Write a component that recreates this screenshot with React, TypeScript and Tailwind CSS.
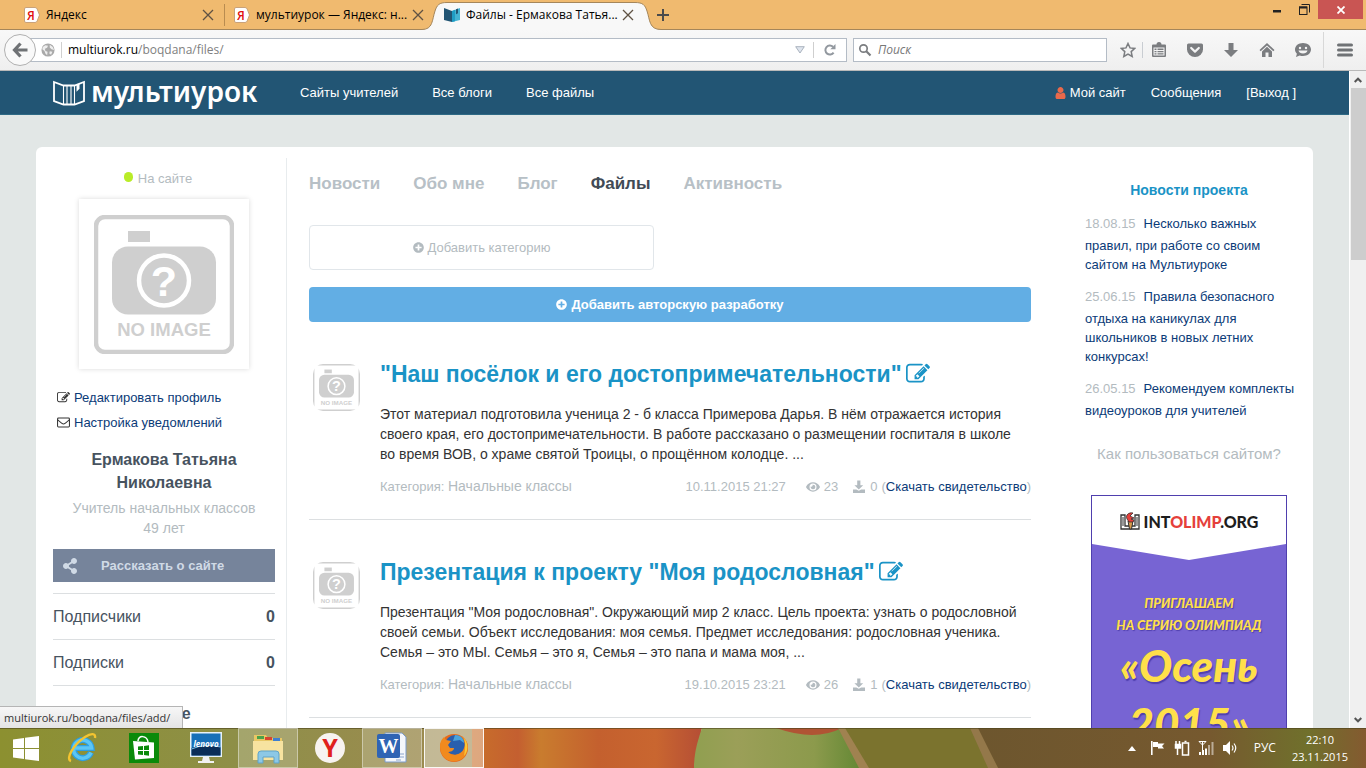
import type { ReactNode } from "react";
import { FaEye, FaPlusCircle, FaShareAlt } from "react-icons/fa";

const news = [
  { date: "18.08.15", text: "Несколько важных правил, при работе со своим сайтом на Мультиуроке" },
  { date: "25.06.15", text: "Правила безопасного отдыха на каникулах для школьников в новых летних конкурсах!" },
  { date: "26.05.15", text: "Рекомендуем комплекты видеоуроков для учителей" },
];

const articles = [
  {
    title: '"Наш посёлок и его достопримечательности"',
    text: "Этот материал подготовила ученица 2 - б класса Примерова Дарья. В нём отражается история своего края, его достопримечательности. В работе рассказано о размещении госпиталя в школе во время ВОВ, о храме святой Троицы, о прощённом колодце. ...",
    date: "10.11.2015 21:27",
    views: 23,
    downloads: 0,
  },
  {
    title: 'Презентация к проекту "Моя родословная"',
    text: 'Презентация "Моя родословная". Окружающий мир 2 класс. Цель проекта: узнать о родословной своей семьи. Объект исследования: моя семья. Предмет исследования: родословная ученика. Семья – это МЫ. Семья – это я, Семья – это папа и мама моя, ...',
    date: "19.10.2015 23:21",
    views: 26,
    downloads: 1,
  },
];

const sections = [
  { label: "Новости" },
  { label: "Обо мне" },
  { label: "Блог" },
  { label: "Файлы", active: true },
  { label: "Активность" },
];

function EditIcon({ className }: { className: string }) {
  return (
    <svg viewBox="0 0 1792 1792" fill="currentColor" className={className} aria-hidden="true">
      <path d="M888 1184l116-116-152-152-116 116v56h96v96h56zm440-720q-16-16-33 1l-350 350q-17 17-1 33t33-1l350-350q17-17 1-33zm80 594v190q0 119-84.5 203.5t-203.5 84.5h-832q-119 0-203.5-84.5t-84.5-203.5v-832q0-119 84.5-203.5t203.5-84.5h832q63 0 117 25 15 7 18 23 3 17-9 29l-49 49q-14 14-32 8-23-6-45-6h-832q-66 0-113 47t-47 113v832q0 66 47 113t113 47h832q66 0 113-47t47-113v-126q0-13 9-22l64-64q15-15 35-7t20 29zm-96-738l288 288-672 672h-288v-288zm444 132l-92 92-288-288 92-92q28-28 68-28t68 28l152 152q28 28 28 68t-28 68z" />
    </svg>
  );
}

function UserIcon({ className }: { className: string }) {
  return (
    <svg viewBox="256 128 1280 1536" fill="currentColor" className={className} aria-hidden="true">
      <path d="M1536 1399q0 109-62.5 187t-150.5 78h-854q-88 0-150.5-78t-62.5-187q0-85 8.5-160.5t31.5-152 58.5-131 94-89 134.5-34.5q131 128 313 128t313-128q76 0 134.5 34.5t94 89 58.5 131 31.5 152 8.5 160.5zm-256-887q0 159-112.5 271.5t-271.5 112.5-271.5-112.5-112.5-271.5 112.5-271.5 271.5-112.5 271.5 112.5 112.5 271.5z" />
    </svg>
  );
}

function MailIcon({ className }: { className: string }) {
  return (
    <svg viewBox="0 0 14 14" fill="none" stroke="currentColor" className={className} aria-hidden="true">
      <rect x="0.6" y="2.1" width="12.8" height="9.8" rx="1" strokeWidth="1.1" />
      <path d="M0.8 4.2 Q5.6 8.6 7 8.6 T13.2 4.2" strokeWidth="1.1" />
    </svg>
  );
}

function SaveIcon({ className }: { className: string }) {
  return (
    <svg viewBox="0 0 14 14" fill="currentColor" className={className} aria-hidden="true">
      <path d="M5.2 0.5h3.2v4.7h2.8L6.8 9.4 2.4 5.2h2.8z" />
      <path d="M1 9.4h3.4l2.4 1.4 2.4-1.4H13V13H1z" />
    </svg>
  );
}

function NoImage({ className }: { className: string }) {
  return (
    <svg viewBox="0 0 140 139" className={className} role="img" aria-label="NO IMAGE" fontFamily="Liberation Sans, sans-serif" fontWeight="700">
      <rect x="2" y="2" width="136" height="135" rx="9" fill="#fff" stroke="#cfcfcf" strokeWidth="4.5" />
      <rect x="34" y="16" width="22" height="11" fill="#cfcfcf" />
      <rect x="18" y="31.5" width="104" height="68" rx="16" fill="#cfcfcf" />
      <circle cx="70" cy="65.5" r="25" fill="none" stroke="#fff" strokeWidth="4.5" />
      <text x="70" y="81" textAnchor="middle" fontSize="43" fill="#fff">
        ?
      </text>
      <text x="70" y="121" textAnchor="middle" fontSize="18.5" fill="#cfcfcf">
        NO IMAGE
      </text>
    </svg>
  );
}

function YandexFavicon() {
  return (
    <svg viewBox="0 0 16 16" className="h-4 w-4">
      <path d="M2 0.5h9q1.5 0 2.2 1.5L15.5 8l-2.3 6q-.7 1.5-2.2 1.5H2Q.5 15.5.5 14V2Q.5.5 2 .5z" fill="#fff" stroke="#c9a27a" />
      <text x="7" y="12.5" textAnchor="middle" fontSize="12" fontWeight="600" fill="#e01010">
        Я
      </text>
    </svg>
  );
}

function CloseIcon() {
  return (
    <svg viewBox="0 0 12 12" className="h-3 w-3" stroke="#5f5243" strokeWidth="1.3">
      <path d="M1 1l10 10M11 1L1 11" />
    </svg>
  );
}

function BrowserTab({ icon, title, active }: { icon: ReactNode; title: string; active?: boolean }) {
  return (
    <div className={`relative flex h-[30px] w-[210px] items-center gap-1.5 px-2.5 ${active ? "z-10" : ""}`}>
      {active && (
        <svg viewBox="0 0 240 30" className="absolute top-0 -left-3 h-[30px] w-[240px]">
          <path
            d="M0 29.5C11 29.5 10 20 13 11C15 5 17 2.5 25 2.5H213C221 2.5 223 5 225 11C228 20 227 29.5 239 29.5V30H0Z"
            fill="#f8f8f8"
          />
          <path
            d="M0 29.5C11 29.5 10 20 13 11C15 5 17 2.5 25 2.5H213C221 2.5 223 5 225 11C228 20 227 29.5 239 29.5"
            fill="none"
            stroke="#a5865a"
          />
        </svg>
      )}
      <span className="relative shrink-0">{icon}</span>
      <span className="relative min-w-0 flex-1 whitespace-nowrap">{title}</span>
      <button className="relative" aria-label="Закрыть вкладку">
        <CloseIcon />
      </button>
    </div>
  );
}

function TabBar() {
  return (
    <div className="flex h-[30px] shrink-0 items-center border-b border-[#a5865a] bg-[#f0ba6f] pl-3.5 text-xs text-black">
      <BrowserTab icon={<YandexFavicon />} title="Яндекс" />
      <span className="-mr-px h-[22px] w-px bg-[#b98c50]" />
      <BrowserTab icon={<YandexFavicon />} title="мультиурок — Яндекс: н..." />
      <BrowserTab
        active
        title="Файлы - Ермакова Татья..."
        icon={
          <svg viewBox="0 0 16 16" className="h-4 w-4">
            <path d="M0 1l8 3v11l-8-2z" fill="#225574" />
            <path d="M16 1L8 4v11l8-2z" fill="#45b3d3" />
            <path d="M8 4l3-1.2v11.5L8 15z" fill="#1f9cc4" />
            <path d="M12 2.3v5l2-1V1.6z" fill="#225574" />
          </svg>
        }
      />
      <button className="ml-3" aria-label="Новая вкладка">
        <svg viewBox="0 0 14 14" className="h-3.5 w-3.5" stroke="#4b4b4b" strokeWidth="2">
          <path d="M7 1v12M1 7h12" />
        </svg>
      </button>
      <div className="ml-auto flex items-start self-start pr-[3px]">
        <button className="flex h-5 w-[26px] items-center justify-center" aria-label="Свернуть">
          <svg viewBox="0 0 8 8" className="h-2 w-2">
            <path d="M0 4h8v2.5H0z" fill="#222" />
          </svg>
        </button>
        <button className="flex h-[19px] w-[28px] items-center justify-center" aria-label="Развернуть">
          <svg viewBox="0 0 11 11" className="h-[11px] w-[11px]" fill="none" stroke="#222">
            <path d="M2.5 0.5h8v8" />
            <rect x="0.5" y="3" width="7.5" height="7.5" />
            <path d="M0 3.5h8" strokeWidth="2" />
          </svg>
        </button>
        <button className="flex h-[19px] w-[45px] items-center justify-center bg-[#c95553]" aria-label="Закрыть">
          <svg viewBox="0 0 8 8" className="h-2 w-2" stroke="#fff" strokeWidth="1.8">
            <path d="M0.5 0.5l7 7M7.5 0.5l-7 7" />
          </svg>
        </button>
      </div>
    </div>
  );
}

function ToolButton({ label, children }: { label: string; children: ReactNode }) {
  return (
    <button className="flex h-6 w-9 items-center justify-center" aria-label={label}>
      <svg viewBox="0 0 16 16" className="h-4 w-4" fill="#7b7d80">
        {children}
      </svg>
    </button>
  );
}

function Toolbar() {
  return (
    <div className="flex h-[41px] shrink-0 items-center border-b border-[#b9b9b9] bg-linear-to-b from-[#f8f8f8] to-[#efefef] pl-1 text-xs">
      <button className="relative z-10 flex h-8 w-8 items-center justify-center rounded-full border border-[#b0b0b0] bg-[#f9f9f9]" aria-label="Назад">
        <svg viewBox="0 0 16 16" className="h-4 w-4" fill="none" stroke="#6f7275" strokeWidth="3.2">
          <path d="M8.5 1.5L2.5 8l6 6.5M3 8h12.5" />
        </svg>
      </button>
      <div className="-ml-2 flex h-6 flex-1 items-center border border-[#b4bcc6] bg-white pl-3">
        <svg viewBox="0 0 16 16" className="h-3.5 w-3.5">
          <circle cx="8" cy="8" r="7.5" fill="#a9a9a9" />
          <path d="M2 4.5l3-2 3 .5-1 2.5-2.5 1L5 9l2.5 1-.5 4-2-2-1-3-2.5-2zM10 2l3.5 2.5L15 8l-3-1-2-2zM10 9.5l3 .5-1.5 3.5-2-1.5z" fill="#eee" />
        </svg>
        <span className="mx-1.5 h-4 w-px bg-[#d0d0d0]" />
        <a href="#" className="flex-1 text-[#808080]">
          <span className="text-black">multiurok.ru</span>/boqdana/files/
        </a>
        <svg viewBox="0 0 10 8" className="mr-2 h-2 w-2.5" fill="#dfe5ee" stroke="#a9b2bd">
          <path d="M0.7 0.7h8.6L5 7z" />
        </svg>
        <button className="flex h-4 w-[33px] items-center justify-center border-l border-[#cfcfcf]" aria-label="Обновить">
          <svg viewBox="0 0 12 12" className="h-3 w-3">
            <path d="M9.6 8.6A4.5 4.5 0 1 1 9 2.8" fill="none" stroke="#92989f" strokeWidth="2" />
            <path d="M11.5 0v5.2H6.3z" fill="#92989f" />
          </svg>
        </button>
      </div>
      <label className="ml-1.5 flex h-6 w-[254px] items-center gap-1 border border-[#b4bcc6] bg-white pl-1">
        <svg viewBox="0 0 14 14" className="h-3.5 w-3.5" fill="none" stroke="#7b7d80" strokeWidth="1.7">
          <circle cx="5.5" cy="5.5" r="3.7" />
          <path d="M8.3 8.3l4.2 4.2" strokeWidth="2.2" />
        </svg>
        <input placeholder="Поиск" aria-label="Поиск" className="ml-0.5 w-40 outline-none placeholder:text-[#777] placeholder:italic" />
      </label>
      <button className="ml-1.5 flex h-4 w-[30px] items-center justify-center border-r border-[#c9cdd2]" aria-label="Добавить в закладки">
        <svg viewBox="0 0 16 16" className="h-4 w-4" fill="none" stroke="#7b7d80" strokeWidth="1.5">
          <path d="M8 1.5l2 4.4 4.8.5-3.6 3.2 1 4.9L8 12l-4.2 2.5 1-4.9L1.2 6.4 6 5.9z" />
        </svg>
      </button>
      <div className="-ml-0.5 flex items-center">
        <ToolButton label="Закладки">
          <path d="M2 2.5h3.5a2.5 2.5 0 0 1 5 0H14a1 1 0 0 1 1 1v10.5a1 1 0 0 1-1 1H2a1 1 0 0 1-1-1V3.5a1 1 0 0 1 1-1zM2.5 5.5v8h11v-8zM3.5 6.5h2V8h-2zM6.5 6.5h6V8h-6zM3.5 9h2v1.3h-2zM6.5 9h6v1.3h-6zM3.5 11.3h2v1.3h-2zM6.5 11.3h6v1.3h-6z" fillRule="evenodd" />
        </ToolButton>
        <ToolButton label="Pocket">
          <path d="M1.5 1.5h13q1.5 0 1.5 1.5v4.5a8 7.5 0 0 1-16 0V3q0-1.5 1.5-1.5z" />
          <path d="M4.2 6L8 9.6 11.8 6" fill="none" stroke="#f4f4f4" strokeWidth="2.2" strokeLinecap="round" strokeLinejoin="round" />
        </ToolButton>
        <ToolButton label="Загрузки">
          <path d="M5.5 1h5v7H15l-7 7-7-7h4.5z" />
        </ToolButton>
        <ToolButton label="Домой">
          <path d="M8 1l7.5 7-1.2 1.2L8 3.4 1.7 9.2.5 8z" />
          <path d="M8 4.8l5 4.6V15H9.5v-4.5h-3V15H3V9.4z" />
        </ToolButton>
        <ToolButton label="Hello">
          <path d="M8 1c4.5 0 8 2.8 8 6.5S12.5 14 8 14c-1.2 0-2.3-.2-3.3-.6L1 15l.9-3.3C.7 10.6 0 9.2 0 7.5 0 3.8 3.5 1 8 1z" />
          <circle cx="5" cy="6" r="1.2" fill="#f4f4f4" />
          <circle cx="11" cy="6" r="1.2" fill="#f4f4f4" />
          <path d="M3.5 8.5h9c-.5 4-8.5 4-9 0z" fill="#f4f4f4" />
        </ToolButton>
      </div>
      <button className="ml-0.5 flex h-9 w-[43px] items-center justify-center border-l border-[#d8d8d8]" aria-label="Меню">
        <svg viewBox="0 0 16 14" className="h-3.5 w-4" stroke="#6f7275" strokeWidth="3" strokeLinecap="round">
          <path d="M1.5 2h13M1.5 7h13M1.5 12h13" />
        </svg>
      </button>
    </div>
  );
}

function SiteHeader() {
  return (
    <header className="flex h-11 items-center border-b border-[#2f6a85] bg-[#225574] px-[53px] text-[13px] text-white">
      <a href="#" className="flex w-[247px] items-center gap-1.5 text-[28px] leading-none font-semibold" style={{ fontFamily: "Noto Sans, sans-serif" }}>
        <svg viewBox="0 0 32 26" className="h-[26px] w-8 shrink-0" fill="none" stroke="#fff" strokeWidth="1.8">
          <path d="M1 2l9.5 3.5h11L31 2v19l-9.5 3.5h-11L1 21z" />
          <path d="M10.5 5.5v19M14 6v18M18 6v18M21.5 5.5v19" strokeWidth="1.1" />
          <path d="M23.5 4.8v7l3-3V3.5z" fill="#fff" stroke="none" />
        </svg>
        <span className="pb-1">мультиурок</span>
      </a>
      <nav className="flex gap-[34px]">
        <a href="#">Сайты учителей</a>
        <a href="#">Все блоги</a>
        <a href="#">Все файлы</a>
      </nav>
      <nav className="ml-auto flex gap-[25px]">
        <a href="#" className="flex items-center gap-1">
          <UserIcon className="h-3 w-[11px] text-[#e9694b]" />
          Мой сайт
        </a>
        <a href="#">Сообщения</a>
        <a href="#">[Выход ]</a>
      </nav>
    </header>
  );
}

function Sidebar() {
  return (
    <aside className="w-[251px] shrink-0 border-r border-[#e8ecee] pr-[11px] pl-[17px]">
      <p className="flex items-center justify-center gap-[5px] pt-[11px] pr-3 text-[13px] leading-5 text-[#b3bbc0]">
        <span className="mb-1 h-2.5 w-[9px] rounded-full bg-[#b9ec28]" />
        На сайте
      </p>
      <div className="mx-auto mt-2.5 flex h-[170px] w-[170px] items-center justify-center bg-white shadow-[0_0_5px_rgba(0,0,0,0.15)]">
        <NoImage className="w-[140px]" />
      </div>
      <ul className="mt-4 pl-1 text-[13px] leading-[25px] text-[#0b3b78]">
        <li>
          <a href="#" className="flex items-center gap-1">
            <EditIcon className="h-[13px] w-[13px] text-[#333]" />
            Редактировать профиль
          </a>
        </li>
        <li>
          <a href="#" className="flex items-center gap-1">
            <MailIcon className="h-[13px] w-[13px] text-[#333]" />
            Настройка уведомлений
          </a>
        </li>
      </ul>
      <h2 className="mt-[13px] px-8 text-center text-base leading-[23px] font-bold text-[#47535f]">Ермакова Татьяна Николаевна</h2>
      <p className="mt-1 text-center text-sm leading-5 text-[#b3bbc0]">
        Учитель начальных классов
        <br />
        49 лет
      </p>
      <button className="mt-[11px] flex h-[33px] w-full items-center bg-[#76849b] pl-2 text-[13px] font-bold text-[#d0dae6]">
        <FaShareAlt className="mr-[22px] h-4 w-[18px]" />
        Рассказать о сайте
      </button>
      <dl className="mt-[11px] border-t border-[#dcdfe1] text-base text-[#47535f]">
        <div className="flex h-[46px] items-center justify-between border-b border-[#dcdfe1]">
          <dt>Подписчики</dt>
          <dd className="font-bold">0</dd>
        </div>
        <div className="flex h-[46px] items-center justify-between border-b border-[#dcdfe1]">
          <dt>Подписки</dt>
          <dd className="font-bold">0</dd>
        </div>
      </dl>
      <h3 className="mt-4 h-14 text-center text-base font-bold text-[#47535f]">О себе</h3>
    </aside>
  );
}

function Article({ title, text, date, views, downloads }: (typeof articles)[number]) {
  return (
    <article className="flex border-b border-[#dcdfe1] pt-9 pb-[22px]">
      <NoImage className="mt-1.5 mr-5 ml-1 h-[47px] w-[47px] shrink-0 rounded-[10px]" />
      <div className="min-w-0 flex-1">
        <h2 className="flex items-center gap-1 text-[23px] leading-8 font-bold text-[#1a93c6]">
          <a href="#">{title}</a>
          <a href="#" aria-label="Редактировать">
            <EditIcon className="h-6 w-6" />
          </a>
        </h2>
        <p className="mt-3.5 pr-1 text-sm leading-5 text-[#333]">{text}</p>
        <div className="mt-3 flex items-center text-[13px] leading-5 text-[#b3bbc0]">
          <span className="mr-auto">
            Категория: <span className="text-sm leading-5">Начальные классы</span>
          </span>
          <time className="mr-5">{date}</time>
          <span className="mr-3.5 flex items-center gap-1">
            <FaEye className="h-3.5 w-3.5" />
            {views}
          </span>
          <span className="flex items-center gap-1">
            <SaveIcon className="h-3.5 w-3.5" />
            {downloads}
            <span>
              (
              <a href="#" className="text-[#0b3b78]">
                Скачать свидетельство
              </a>
              )
            </span>
          </span>
        </div>
      </div>
    </article>
  );
}

function Banner() {
  return (
    <a
      href="#"
      className="mx-auto mt-[31px] block h-[400px] w-[196px] border border-[#4f3fae] bg-[#7764d3] text-center font-black text-[#ffe04a] italic"
      style={{ fontFamily: "Lato, sans-serif" }}
    >
      <div
        className="flex h-16 items-start justify-center gap-1 bg-white pt-3.5 text-base leading-6 text-[#1d1d1d] not-italic"
        style={{ clipPath: "polygon(0 0, 100% 0, 100% 75%, 50% 100%, 0 75%)" }}
      >
        <svg viewBox="0 0 20 18" className="mt-0.5 h-[18px] w-5">
          <path d="M1 3h4v11h10V3h4v14H1z" fill="#fff" stroke="#333" strokeWidth="1.3" />
          <path d="M3 5v9M17 5v9" stroke="#333" />
          <path d="M8 9h5l-1.5 8h-2z" fill="#d99a4a" stroke="#333" />
          <path d="M13 1C9 0 5 3 7 7l2 3h4l1-2-3-1 3-1-4-2z" fill="#e5403b" stroke="#222" strokeWidth=".7" />
        </svg>
        <span>
          INT<span className="text-[#e5403b]">OLIMP</span>.ORG
        </span>
      </div>
      <p className="mt-8 text-[13px] leading-[22px] text-shadow-[1px_1px_1px_#4f3fae]">
        ПРИГЛАШАЕМ
        <br />
        НА СЕРИЮ ОЛИМПИАД
      </p>
      <p className="text-[44px] leading-[58px] text-shadow-[1px_2px_1px_#4f3fae]">
        «Осень
        <br />
        2015»
      </p>
    </a>
  );
}

function NewsColumn() {
  return (
    <aside className="mr-5 w-52 shrink-0 text-[13px]">
      <h2 className="pt-[22px] text-center text-sm leading-5 font-bold text-[#1a93c6]">Новости проекта</h2>
      <ul className="mt-[11px] -mr-2 flex flex-col gap-2.5 leading-[19px] text-[#0b3b78]">
        {news.map(({ date, text }) => (
          <li key={date}>
            <span className="mr-2 inline-block leading-[25px] text-[#b3bbc0]">{date}</span>
            <a href="#">{text}</a>
          </li>
        ))}
      </ul>
      <p className="mt-6 text-center text-[15px] leading-5 whitespace-nowrap text-[#b3bbc0]">
        <a href="#">Как пользоваться сайтом?</a>
      </p>
      <Banner />
    </aside>
  );
}

function Page() {
  return (
    <div className="min-w-0 flex-1 overflow-hidden bg-[#e2e7e6]">
      <SiteHeader />
      <main className="mx-9 mt-8 flex rounded-md bg-white pt-[11px]">
        <Sidebar />
        <div className="mr-[54px] ml-[22px] min-w-0 flex-1">
          <nav className="flex gap-[33px] pt-[15px] text-[17px] leading-[22px] font-bold text-[#b7c0c6]">
            {sections.map(({ label, active }) => (
              <a key={label} href="#" className={active ? "text-[#414b55]" : ""}>
                {label}
              </a>
            ))}
          </nav>
          <button className="mt-[30px] flex h-[45px] w-[345px] items-center justify-center gap-1 rounded border border-[#e1e6ea] text-[13px] text-[#b3bbc0]">
            <FaPlusCircle className="h-[11px] w-[11px]" />
            Добавить категорию
          </button>
          <button className="mt-[17px] flex h-[35px] w-full items-center justify-center gap-1 rounded bg-[#62aee4] text-[13px] font-bold text-white">
            <FaPlusCircle className="h-[11px] w-[11px]" />
            Добавить авторскую разработку
          </button>
          {articles.map((article) => (
            <Article key={article.title} {...article} />
          ))}
        </div>
        <NewsColumn />
      </main>
    </div>
  );
}

function Scrollbar() {
  return (
    <div className="flex w-[17px] shrink-0 flex-col items-center border-l border-white bg-[#f0f0f0]">
      <button className="flex h-[17px] w-full items-center justify-center" aria-label="Вверх">
        <svg viewBox="0 0 8 6" className="h-1.5 w-2" fill="none" stroke="#555" strokeWidth="2">
          <path d="M0.7 5L4 1.7 7.3 5" />
        </svg>
      </button>
      <div className="h-[172px] w-[15px] bg-[#cdcdcd]" />
      <button className="mt-auto flex h-[17px] w-full items-center justify-center" aria-label="Вниз">
        <svg viewBox="0 0 8 6" className="h-1.5 w-2" fill="none" stroke="#555" strokeWidth="2">
          <path d="M0.7 1L4 4.3 7.3 1" />
        </svg>
      </button>
    </div>
  );
}

function TaskButton({ label, open, active, children }: { label: string; open?: boolean; active?: boolean; children: ReactNode }) {
  return (
    <div className="w-[62px] px-px">
      <button
        aria-label={label}
        className={`flex h-10 w-full items-center justify-center ${open ? "border border-white/40 bg-white/20" : ""} ${active ? "border border-white/90 bg-white/40" : ""}`}
      >
        <svg viewBox="0 0 32 32" className="h-8 w-8">
          {children}
        </svg>
      </button>
    </div>
  );
}

function TaskbarArt() {
  return (
    <svg viewBox="0 0 1366 40" preserveAspectRatio="none" className="absolute inset-0 h-full w-full">
      <defs>
        <linearGradient id="olive">
          <stop offset="0" stopColor="#8c9030" />
          <stop offset="0.5" stopColor="#8e8f48" />
          <stop offset="1" stopColor="#a08a52" />
        </linearGradient>
        <linearGradient id="petal">
          <stop offset="0" stopColor="#c8702a" />
          <stop offset="0.2" stopColor="#c45f30" />
          <stop offset="0.3" stopColor="#c97c2e" />
          <stop offset="0.55" stopColor="#c4602e" />
          <stop offset="0.8" stopColor="#c96630" />
          <stop offset="1" stopColor="#b54e35" />
        </linearGradient>
        <linearGradient id="leaf">
          <stop offset="0" stopColor="#909f50" />
          <stop offset="0.25" stopColor="#9b9f58" />
          <stop offset="0.7" stopColor="#8c9a4c" />
          <stop offset="1" stopColor="#5f8632" />
        </linearGradient>
        <linearGradient id="bark">
          <stop offset="0" stopColor="#6d562e" />
          <stop offset="0.6" stopColor="#76592f" />
          <stop offset="0.85" stopColor="#70702c" />
          <stop offset="1" stopColor="#845a30" />
        </linearGradient>
      </defs>
      <rect width="484" height="40" fill="url(#olive)" />
      <path d="M472 0h230l-8 40H472z" fill="url(#petal)" />
      <path d="M702 0h138l26 40H694c0-16 4-28 8-40z" fill="url(#leaf)" />
      <path d="M776 0h66q-14 7-30 7T776 0z" fill="#b05434" />
      <path d="M838 0h208v40H862z" fill="#7b732e" />
      <path d="M838 0h7l24 40h-10z" fill="#a08250" />
      <path d="M976 0h390v40H998z" fill="url(#bark)" />
      <path d="M970 0h8l20 40h-10z" fill="#94784a" />
      <path d="M0 0.5h1366" stroke="#4b431c" strokeOpacity="0.6" />
    </svg>
  );
}

function Taskbar() {
  return (
    <footer className="relative h-10 shrink-0 overflow-hidden text-[11px] text-white">
      <TaskbarArt />
      <div className="relative flex h-full items-center">
        <button className="flex h-10 w-[51px] items-center justify-center" aria-label="Пуск">
          <svg viewBox="0 0 26 25" className="h-[25px] w-[26px]" fill="#fff">
            <path d="M0 3.5L11 2v10H0zM12 1.8L26 0v12H12zM0 13h11v10L0 21.5zM12 13h14v12l-14-1.8z" />
          </svg>
        </button>
        <TaskButton label="Internet Explorer">
          <path d="M25 20.5a9 9 0 1 1 .6-4.5H8" fill="none" stroke="#2f9fe0" strokeWidth="6" />
          <path d="M25 20.5a9 9 0 1 1 .6-4.5H8" fill="none" stroke="#5cc6f5" strokeWidth="3.5" />
          <path d="M5 29C-1 27 8 12 19 5c6-4 11-4 10 1" fill="none" stroke="#f4c430" strokeWidth="2.4" />
        </TaskButton>
        <TaskButton label="Магазин">
          <rect x="1" y="1" width="30" height="30" fill="#0a8a0a" />
          <path d="M5 9l21 1.5V26L7 27.5z" fill="#fff" />
          <path d="M10 9c0-6 9-6 10 1" fill="none" stroke="#fff" strokeWidth="1.5" />
          <path d="M10 14.5l5-.5v4h-5zM16 14l5-.7V18h-5zM10 19h5v4l-5-.5zM16 19h5v4.7l-5-.7z" fill="#0a8a0a" />
        </TaskButton>
        <TaskButton label="Lenovo">
          <rect x="0" y="0" width="32" height="25" fill="#e8f2f8" />
          <rect x="1.5" y="1.5" width="29" height="22" fill="#1770b8" />
          <path d="M1.5 16q14-5 29-1v8.5h-29z" fill="#0b2e58" />
          <path d="M1.5 17q14-6 29-2" fill="none" stroke="#7cc4ee" />
          <text x="16" y="15" textAnchor="middle" fontSize="8" fontWeight="700" fontStyle="italic" fill="#fff">
            lenovo
          </text>
          <path d="M13 25h6l1 4h4v2H8v-2h4z" fill="#f2f2f2" />
        </TaskButton>
        <TaskButton label="Проводник" open>
          <path d="M2 3h12l2 3h14v20H2z" fill="#e8c765" />
          <path d="M5 4h7v3H5z" fill="#4aa24a" />
          <path d="M13 5h7v3h-7z" fill="#d8452e" />
          <path d="M21 6h7v3h-7z" fill="#3f7fd0" />
          <path d="M1 9h30v19H1z" fill="#f7e3a0" />
          <path d="M6 31V22q0-3 3-3h15q3 0 3 3v9h-5v-6H11v6z" fill="#8cc8e6" stroke="#5ea3c8" />
        </TaskButton>
        <TaskButton label="Яндекс.Браузер">
          <circle cx="16" cy="16" r="15" fill="#f7f3f0" />
          <text x="16" y="25" textAnchor="middle" fontSize="25" fontWeight="700" fill="#e0201c">
            Y
          </text>
        </TaskButton>
        <TaskButton label="Word" open>
          <path d="M9 1h17l4 4v25H9z" fill="#f4f7fb" stroke="#7d9bc8" />
          <path d="M20 22h8M20 25h8M20 28h5" stroke="#8aa4cc" />
          <rect x="1" y="2" width="23" height="24" rx="2" fill="#2f64b4" />
          <text x="12.5" y="21" textAnchor="middle" fontSize="20" fontWeight="700" fontFamily="Liberation Serif, serif" fill="#fff">
            W
          </text>
        </TaskButton>
        <TaskButton label="Firefox" active>
          <circle cx="16" cy="16" r="14" fill="#e66a1c" />
          <circle cx="17" cy="13" r="10" fill="#2a5fae" />
          <path d="M17 3c6 0 9 4 9 8l-4-3-7 1z" fill="#4aa3dc" />
          <path d="M2 14C2 9 5 6 6 5l2 3 5 1-3 4 2 3h4c0 3-4 4-6 4 4 5 14 3 16-4 2-5 0-9-3-12 6 3 8 10 6 16-3 9-14 12-21 7C4 24 2 19 2 14z" fill="#f18a1e" />
          <path d="M26 6c5 6 4 14 0 18 1-6 2-12 0-18z" fill="#fbc835" />
        </TaskButton>
        <div className="ml-auto flex items-center pr-[18px]">
          <button className="mr-3.5" aria-label="Скрытые значки">
            <svg viewBox="0 0 8 5" className="h-[5px] w-2" fill="#fff">
              <path d="M4 0l4 5H0z" />
            </svg>
          </button>
          <div className="mr-4 flex gap-2">
            <svg viewBox="0 0 16 16" className="h-4 w-4" fill="#fff">
              <path d="M1 1h1.6v14H1zM3 2h5v1.5h6.5L12 6l2 2.5H8V7H3z" />
            </svg>
            <svg viewBox="0 0 16 16" className="h-4 w-4" fill="none" stroke="#fff" strokeWidth="1.5">
              <rect x="8.5" y="3" width="6" height="12" />
              <path d="M10.5 1.5h2M3.5 8v7M2 1v3M5.5 1v3" />
              <path d="M1.5 4.5h5V8h-5z" fill="#fff" />
            </svg>
            <svg viewBox="0 0 16 16" className="h-4 w-4" fill="#fff">
              <path d="M1 12h2v3H1zM4 10h2v5H4zM7 8.5h2V15H7z" />
              <path d="M10 5h2v10h-2zM13.5 2h2v13h-2z" fillOpacity="0.5" />
              <path d="M1 1.5h7L4.5 5zM4.5 1v9" fill="none" stroke="#fff" />
            </svg>
            <svg viewBox="0 0 16 16" className="h-4 w-4" fill="#fff">
              <path d="M1 5h3l4-4v14l-4-4H1z" />
              <path d="M10 5.5q2 2.5 0 5M12 3.5q3.5 4.5 0 9" fill="none" stroke="#fff" strokeWidth="1.2" />
            </svg>
          </div>
          <span className="mr-4 text-xs">РУС</span>
          <time className="text-center leading-[17px]">
            22:10
            <br />
            23.11.2015
          </time>
        </div>
      </div>
    </footer>
  );
}

export default function App() {
  return (
    <div className="flex h-screen flex-col overflow-hidden" style={{ fontFamily: "Open Sans, sans-serif" }}>
      <TabBar />
      <Toolbar />
      <div className="relative flex min-h-0 flex-1" style={{ fontFamily: "Liberation Sans, Arial, sans-serif" }}>
        <Page />
        <Scrollbar />
        <div
          className="absolute bottom-0 left-0 h-[22px] w-[183px] border-t border-r border-[#b5b5b5] bg-linear-to-b from-[#f7f7f7] to-[#e4e4e4] px-1 text-[11px] leading-[21px] text-[#333]"
          style={{ fontFamily: "Open Sans, sans-serif" }}
        >
          multiurok.ru/boqdana/files/add/
        </div>
      </div>
      <Taskbar />
    </div>
  );
}
